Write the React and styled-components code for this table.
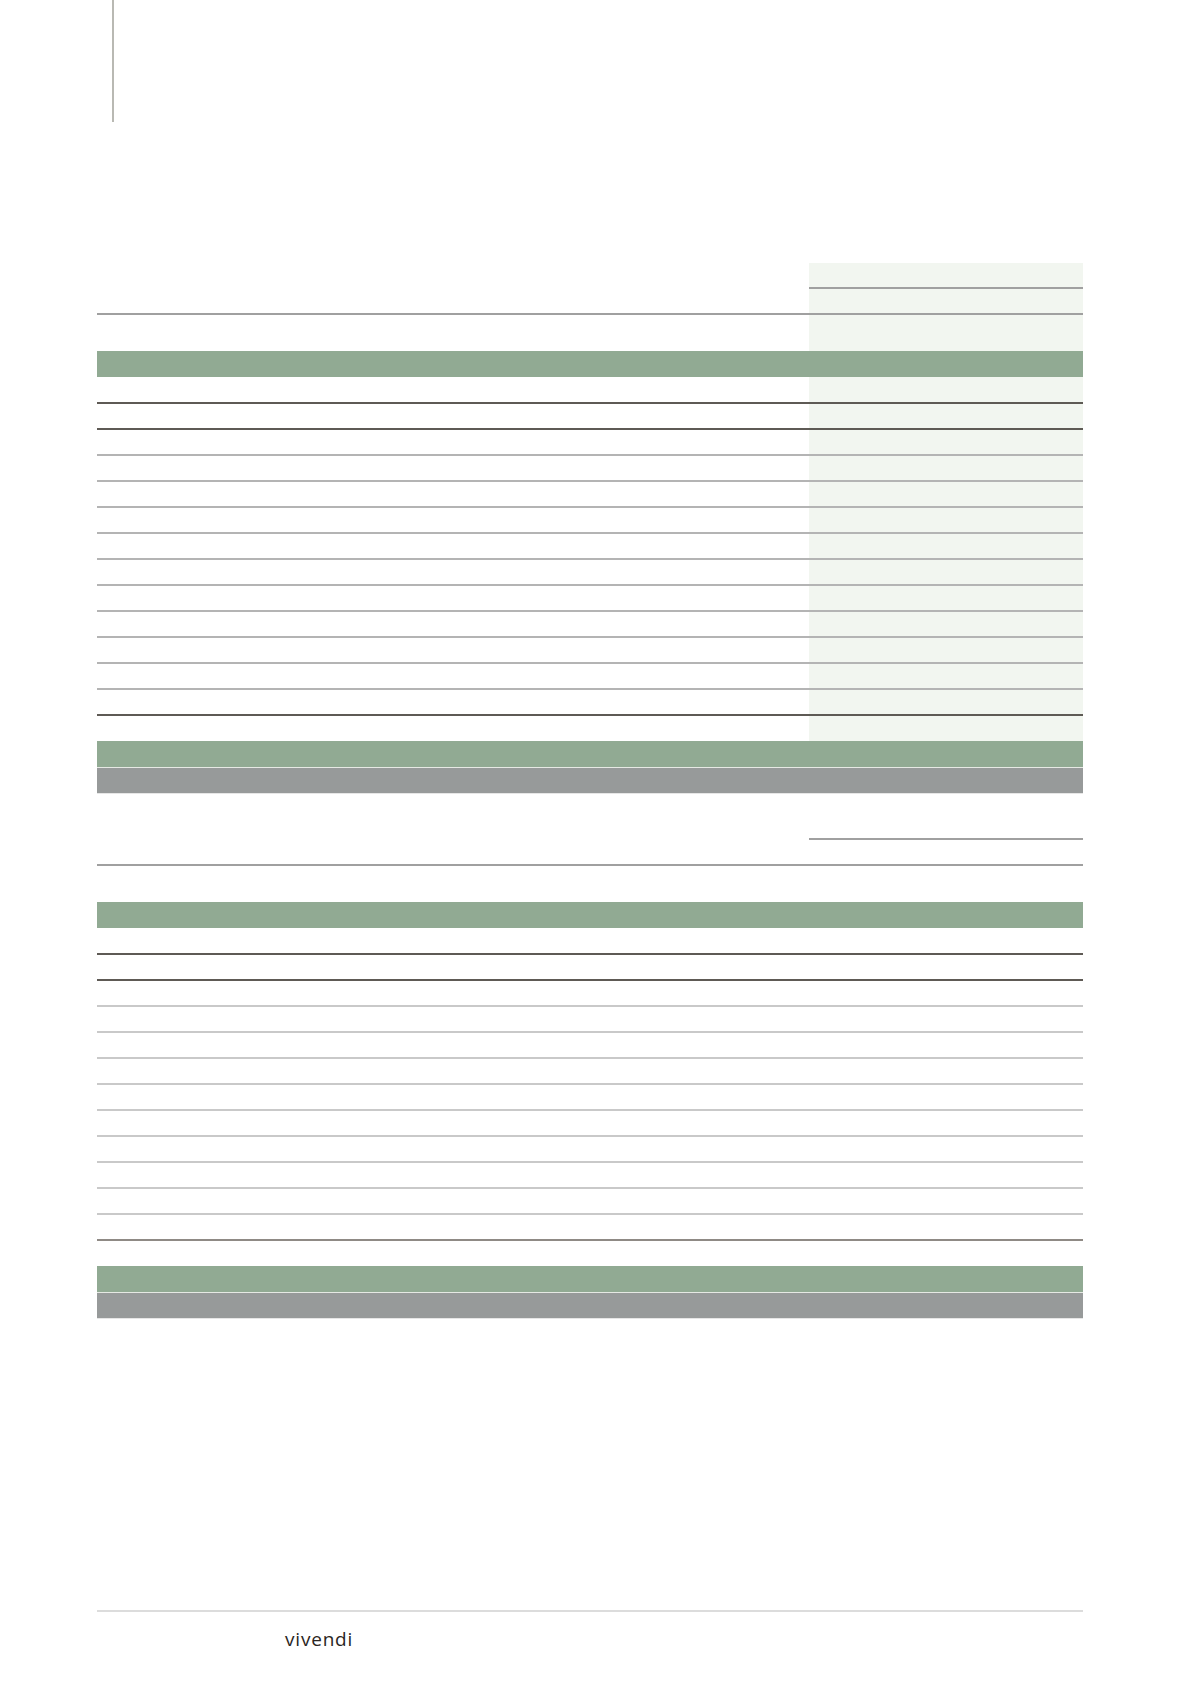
import React from 'react';
import styled, { createGlobalStyle } from 'styled-components';

const GlobalStyle = createGlobalStyle`
  html, body {
    margin: 0;
    padding: 0;
    background: #ffffff;
    font-family: "Liberation Sans", Arial, sans-serif;
  }
`;

const Page = styled.div`
  width: 1196px;
  height: 1692px;
  display: flex;
  flex-direction: column;
  padding-left: 97px;
  box-sizing: border-box;
`;

const TopRule = styled.div`
  width: 2px;
  height: 122px;
  margin-left: 15px;
  background: #b9b9b3;
`;

const Table = styled.div`
  width: 986px;
  display: flex;
  flex-direction: column;
  margin-top: ${({ top }) => top}px;
`;

const Row = styled.div`
  display: grid;
  grid-template-columns: 661px 51px 91px 91px 92px;
  height: ${({ h }) => h || 26}px;
`;

const Cell = styled.div`
  box-sizing: border-box;
  background: ${({ tint }) => (tint ? '#f2f6f0' : 'transparent')};
  border-bottom: ${({ line }) => (line ? `2px solid ${line}` : 'none')};
`;

const Band = styled.div`
  height: ${({ h }) => h || 26}px;
  box-sizing: border-box;
  background: ${({ tone }) => (tone === 'gray' ? '#979a9a' : '#91aa93')};
  border-top: ${({ tone }) => (tone === 'gray' ? '1px solid #e6e9e4' : 'none')};
  border-bottom: ${({ tone }) => (tone === 'gray' ? '1px solid #e6e6e6' : 'none')};
`;

const Footer = styled.div`
  margin-top: auto;
  margin-bottom: 42px;
  width: 986px;
  display: flex;
  flex-direction: column;
`;

const FooterRule = styled.div`
  height: 2px;
  background: #dcdcdc;
`;

const Logo = styled.div`
  margin-top: 16px;
  margin-left: 188px;
  font-family: "Open Sans", "Noto Sans", sans-serif;
  font-size: 19px;
  font-weight: 500;
  letter-spacing: 0.8px;
  color: #2a2522;
  line-height: 22px;
`;

const DARK = '#5e5a55';
const MID = '#a0a0a0';

function LineRow({ line, tinted, labelLine = true, h }) {
  return (
    <Row h={h}>
      <Cell line={labelLine ? line : null} />
      <Cell line={labelLine ? line : null} />
      <Cell tint={tinted} line={line} />
      <Cell tint={tinted} line={line} />
      <Cell tint={tinted} line={line} />
    </Row>
  );
}

function DataTable({ top, rows, light, last, tinted, spacer }) {
  const lines = Array.from({ length: rows }, (_, i) => {
    if (i < 2) return DARK;
    if (i === rows - 1) return last;
    return light;
  });
  return (
    <Table top={top}>
      <LineRow line={MID} tinted={tinted} labelLine={false} />
      <LineRow line={MID} tinted={tinted} />
      <LineRow tinted={tinted} h={spacer} />
      <Band />
      {lines.map((line, i) => (
        <LineRow key={i} line={line} tinted={tinted} h={i === 0 ? 27 : 26} />
      ))}
      <LineRow tinted={tinted} h={25} />
      <Band />
      <Band tone="gray" h={27} />
    </Table>
  );
}

export default function App() {
  return (
    <>
      <GlobalStyle />
      <Page>
        <TopRule />
        <DataTable top={141} rows={13} light="#b4b4b4" last={DARK} tinted spacer={36} />
        <DataTable top={20} rows={12} light="#c9c9c9" last="#8f8a85" spacer={36} />
        <Footer>
          <FooterRule />
          <Logo>vivendi</Logo>
        </Footer>
      </Page>
    </>
  );
}
